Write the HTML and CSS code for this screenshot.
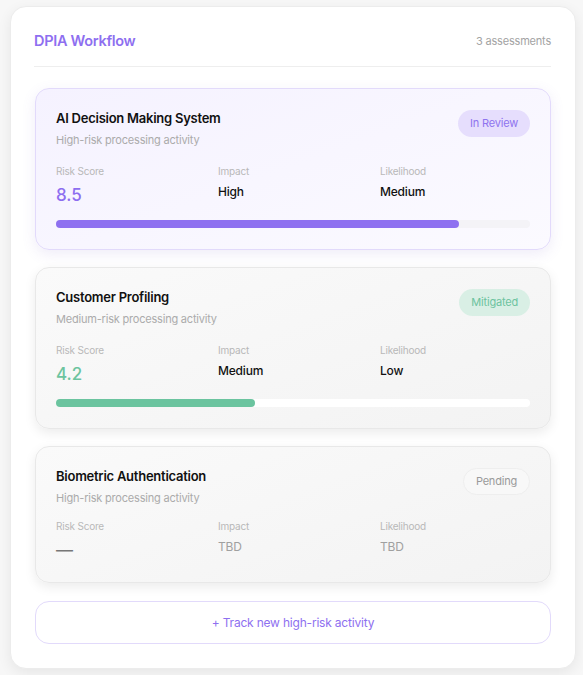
FILE: index.html
```html
<!DOCTYPE html>
<html lang="en">
<head>
    <meta charset="UTF-8">
    <meta name="viewport" content="width=device-width, initial-scale=1.0">
    <title>DPIA Workflow</title>
    <link rel="stylesheet" href="styles.css">
</head>
<body>

    <div class="panel">
        <div class="panel-head">
            <div class="panel-title">DPIA Workflow</div>
            <div class="panel-count">3 assessments</div>
        </div>

        <div class="card review">
            <div class="card-top">
                <div>
                    <div class="card-title">AI Decision Making System</div>
                    <div class="card-sub">High-risk processing activity</div>
                </div>
                <span class="badge">In Review</span>
            </div>
            <div class="stats">
                <div class="stat">
                    <div class="label">Risk Score</div>
                    <div class="score">8.5</div>
                </div>
                <div class="stat">
                    <div class="label">Impact</div>
                    <div class="value">High</div>
                </div>
                <div class="stat">
                    <div class="label">Likelihood</div>
                    <div class="value">Medium</div>
                </div>
            </div>
            <div class="bar"><div class="fill" style="width: 85%"></div></div>
        </div>

        <div class="card mitigated">
            <div class="card-top">
                <div>
                    <div class="card-title">Customer Profiling</div>
                    <div class="card-sub">Medium-risk processing activity</div>
                </div>
                <span class="badge">Mitigated</span>
            </div>
            <div class="stats">
                <div class="stat">
                    <div class="label">Risk Score</div>
                    <div class="score">4.2</div>
                </div>
                <div class="stat">
                    <div class="label">Impact</div>
                    <div class="value">Medium</div>
                </div>
                <div class="stat">
                    <div class="label">Likelihood</div>
                    <div class="value">Low</div>
                </div>
            </div>
            <div class="bar"><div class="fill" style="width: 42%"></div></div>
        </div>

        <div class="card pending">
            <div class="card-top">
                <div>
                    <div class="card-title">Biometric Authentication</div>
                    <div class="card-sub">High-risk processing activity</div>
                </div>
                <span class="badge">Pending</span>
            </div>
            <div class="stats">
                <div class="stat">
                    <div class="label">Risk Score</div>
                    <div class="score">&mdash;</div>
                </div>
                <div class="stat">
                    <div class="label">Impact</div>
                    <div class="value">TBD</div>
                </div>
                <div class="stat">
                    <div class="label">Likelihood</div>
                    <div class="value">TBD</div>
                </div>
            </div>
        </div>

        <button class="add-btn">+ Track new high-risk activity</button>
    </div>

</body>
</html>
```

FILE: styles.css
```css
body {
    font-family: Inter, "Noto Sans", sans-serif;
    margin: 0;
    padding: 6px 7px 8px 10px;
    background: #f7f7f7;
}

.panel {
    background: #fff;
    border: 1px solid #ececec;
    border-radius: 16px;
    box-shadow: 0 4px 14px rgba(0, 0, 0, 0.07);
    padding: 23px 24px 24px 23px;
}

.panel-head {
    display: flex;
    justify-content: space-between;
    align-items: center;
    padding-bottom: 14px;
    border-bottom: 1px solid #eeeeee;
    margin-bottom: 21px;
}

.panel-title {
    font-size: 14.5px;
    font-weight: 600;
    color: #8e6ff0;
    letter-spacing: -0.3px;
    line-height: 22px;
}

.panel-count {
    font-size: 11px;
    color: #a3a3a3;
    letter-spacing: -0.2px;
}

.card {
    border-radius: 14px;
    border: 1px solid #e8e8e8;
    padding: 20px 20px 21px 20px;
    margin-bottom: 17px;
    margin-left: 1px;
    background: linear-gradient(160deg, #fafafa, #f3f3f3);
    box-shadow: 0 4px 12px rgba(0, 0, 0, 0.08);
}

.card.review {
    border-color: #e2dafb;
    background: linear-gradient(160deg, #f5f2ff, #fbfaff);
    box-shadow: 0 4px 14px rgba(120, 100, 200, 0.12);
}

.card.pending {
    padding-bottom: 21px;
}

.card-top {
    display: flex;
    justify-content: space-between;
    align-items: flex-start;
}

.card-title {
    font-size: 13px;
    font-weight: 600;
    color: #111;
    line-height: 18px;
    letter-spacing: -0.25px;
}

.card-sub {
    font-size: 11px;
    color: #ababab;
    line-height: 15px;
    margin-top: 6px;
    letter-spacing: -0.2px;
}

.badge {
    font-size: 11px;
    line-height: 27px;
    padding: 0 12px;
    border-radius: 14px;
    margin-top: 1px;
    letter-spacing: -0.2px;
}

.review .badge {
    background: #e6defd;
    color: #8f74ef;
}

.mitigated .badge {
    background: #d9efe5;
    color: #6dc39f;
}

.pending .badge {
    background: #f8f8f8;
    border: 1px solid #eeeeee;
    color: #9a9a9a;
    line-height: 25px;
}

.stats {
    display: grid;
    grid-template-columns: repeat(3, 1fr);
    gap: 12px;
    margin-top: 16px;
}

.pending .stats {
    margin-top: 13px;
}

.label {
    font-size: 10px;
    line-height: 14px;
    color: #b8b8b8;
    letter-spacing: -0.2px;
}

.score {
    font-size: 17px;
    line-height: 22px;
    font-weight: 500;
    margin-top: 6px;
}

.value {
    font-size: 12px;
    font-weight: 500;
    line-height: 16px;
    margin-top: 6px;
    color: #111;
    letter-spacing: -0.2px;
}

.review .score {
    color: #8d6ef0;
}

.mitigated .score {
    color: #6cc49f;
}

.pending .score {
    color: #777;
    font-weight: 400;
}

.pending .value {
    color: #a0a0a0;
    font-weight: 400;
}

.bar {
    height: 8px;
    border-radius: 4px;
    background: #f4f3f7;
    margin-top: 14px;
}

.mitigated .bar {
    background: #ffffff;
}

.fill {
    height: 100%;
    border-radius: 4px;
}

.review .fill {
    background: #8e70f0;
}

.mitigated .fill {
    background: #6bc49f;
}

.add-btn {
    display: block;
    width: calc(100% - 1px);
    margin-left: 1px;
    margin-top: 18px;
    height: 43px;
    border: 1px solid #e2dafb;
    border-radius: 14px;
    background: #fff;
    color: #8e70f0;
    font-family: inherit;
    font-size: 12px;
    letter-spacing: -0.2px;
    cursor: pointer;
}
```
